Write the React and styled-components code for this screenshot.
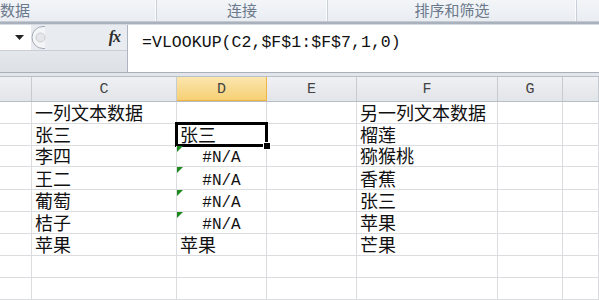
import React from 'react'
import styled, { createGlobalStyle } from 'styled-components'

const CJK = `"Noto Sans CJK SC", "Noto Sans", sans-serif`
const MONO = `"Liberation Mono", "DejaVu Sans Mono", monospace`

const GlobalStyle = createGlobalStyle`
  html, body {
    margin: 0;
    padding: 0;
    background: #ffffff;
    overflow: hidden;
  }
`

const Page = styled.div`
  width: 599px;
  height: 300px;
  overflow: hidden;
  display: flex;
  flex-direction: column;
  background: #ffffff;
`

/* ribbon group captions */
const Ribbon = styled.div`
  height: 21px;
  display: flex;
  background: linear-gradient(#f3f5f8, #e9edf2);
  border-bottom: 1px solid #c3c9d1;
`

const Group = styled.div`
  width: ${p => p.w}px;
  flex: none;
  display: flex;
  align-items: flex-start;
  padding-top: 2px;
  box-sizing: border-box;
  justify-content: ${p => (p.left ? 'flex-start' : 'center')};
  font-family: ${CJK};
  font-size: 15px;
  line-height: 15px;
  color: #6b798c;
  border-right: ${p => (p.last ? 'none' : '1px solid #c9d0d8')};
  box-shadow: ${p => (p.last ? 'none' : 'inset -1px 0 0 #fbfcfd')};
  overflow: hidden;
  white-space: nowrap;
`

const RibbonEdge = styled.div`
  height: 2px;
  background: #a9b1bc;
  border-bottom: 1px solid #d5dae0;
`

/* formula bar */
const FormulaBar = styled.div`
  height: 48px;
  display: flex;
  border-bottom: 1px solid #a9b0ba;
`

const Controls = styled.div`
  width: 127px;
  flex: none;
  display: flex;
  flex-direction: column;
  background: #e8ebef;
  border-right: 1px solid #aeb5bf;
`

const ControlRow = styled.div`
  height: 25px;
  display: flex;
  align-items: center;
  border-bottom: 1px solid #c9ced6;
`

const ControlFill = styled.div`
  flex: 1;
  background: linear-gradient(#e4e7eb, #dde1e6);
`

const NameBox = styled.div`
  width: 31px;
  height: 100%;
  background: #ffffff;
  display: flex;
  align-items: center;
  justify-content: flex-end;
  padding-right: 7px;
  box-sizing: border-box;
`

const Handle = styled.svg`
  width: 16px;
  height: 25px;
  flex: none;
`

const Fx = styled.span`
  margin-left: auto;
  margin-right: 7px;
  font-family: "Liberation Serif", serif;
  font-style: italic;
  font-weight: bold;
  font-size: 16px;
  line-height: 16px;
  letter-spacing: -1px;
  color: #2b2b2b;
`

const Input = styled.div`
  flex: 1;
  background: #ffffff;
  padding: 9px 0 0 14px;
  font-family: ${MONO};
  font-size: 16.5px;
  line-height: 17px;
  letter-spacing: 0.05px;
  color: #111111;
  white-space: nowrap;
`

const Strip = styled.div`
  height: 3px;
  background: #e2e5e9;
  border-bottom: 1px solid #b9bfc7;
`

/* sheet */
const COLS = '32px 145px 90px 90px 141px 65px 1fr'

const HeaderRow = styled.div`
  display: grid;
  grid-template-columns: ${COLS};
  height: 25px;
  border-bottom: 1px solid #b7bdc5;
`

const HeadCell = styled.div`
  display: flex;
  align-items: center;
  justify-content: center;
  font-family: ${MONO};
  font-size: 15px;
  line-height: 15px;
  color: #444444;
  background: ${p =>
    p.active ? 'linear-gradient(#fbe6ae, #f6cf72)' : 'linear-gradient(#eef0f3, #e2e5e9)'};
  border-right: 1px solid ${p => (p.active ? '#f0b54a' : '#c6cbd2')};
  box-shadow: ${p => (p.active ? 'inset 0 -1px 0 #efb343' : 'none')};
`

const Row = styled.div`
  display: grid;
  grid-template-columns: ${COLS};
  height: ${p => p.h}px;
  border-bottom: 1px solid #dadcdf;
  box-sizing: border-box;
`

const Cell = styled.div`
  position: relative;
  display: flex;
  align-items: flex-end;
  justify-content: ${p => (p.error ? 'center' : 'flex-start')};
  padding: 0 0 ${p => (p.error ? '1px' : '2px')} ${p => (p.error ? '0' : '3px')};
  border-right: 1px solid #dadcdf;
  color: #111111;
  white-space: nowrap;

  ${p =>
    p.error &&
    `
    &::before {
      content: '';
      position: absolute;
      left: 0;
      top: 0;
      border-top: 6px solid #1e8a1e;
      border-right: 6px solid transparent;
    }
  `}

  ${p =>
    p.selected &&
    `
    &::after {
      content: '';
      position: absolute;
      left: -2px;
      top: -2px;
      right: -2px;
      bottom: -2px;
      border: 3px solid #000000;
      pointer-events: none;
    }
  `}
`

const Text = styled.span`
  display: block;
  font-family: ${p => (p.error ? MONO : CJK)};
  font-size: ${p => (p.error ? '16px' : '18px')};
  line-height: ${p => (p.error ? '14px' : '17px')};
  height: ${p => (p.error ? '14px' : '17px')};
`

const FillHandle = styled.span`
  position: absolute;
  right: -5px;
  bottom: -5px;
  width: 6px;
  height: 6px;
  background: #000000;
  border: 1px solid #ffffff;
  z-index: 2;
`

const rows = [
  { h: 22, c: '一列文本数据', d: '', f: '另一列文本数据' },
  { h: 22, c: '张三', d: '张三', f: '榴莲', sel: true },
  { h: 22, c: '李四', d: '#N/A', f: '猕猴桃', err: true },
  { h: 23, c: '王二', d: '#N/A', f: '香蕉', err: true },
  { h: 22, c: '葡萄', d: '#N/A', f: '张三', err: true },
  { h: 23, c: '桔子', d: '#N/A', f: '苹果', err: true },
  { h: 22, c: '苹果', d: '苹果', f: '芒果' },
  { h: 23, c: '', d: '', f: '' },
  { h: 22, c: '', d: '', f: '' },
]

const App = () => (
  <Page>
    <GlobalStyle />
    <Ribbon>
      <Group w={157} left>数据</Group>
      <Group w={171}>连接</Group>
      <Group w={249}>排序和筛选</Group>
      <Group w={22} last />
    </Ribbon>
    <RibbonEdge />
    <FormulaBar>
      <Controls>
        <ControlRow>
          <NameBox>
            <svg width="9" height="5" viewBox="0 0 9 5">
              <path d="M0 0 H9 L4.5 5 Z" fill="#222" />
            </svg>
          </NameBox>
          <Handle viewBox="0 0 16 25">
            <path d="M14 1.5 H12 A10.5 10.5 0 0 0 12 23.5 H14" fill="#f4f5f7" stroke="#a3aab4" />
            <circle cx="9.5" cy="12.5" r="4.5" fill="#e4e6e9" stroke="#c7ccd2" />
          </Handle>
          <Fx>fx</Fx>
        </ControlRow>
        <ControlFill />
      </Controls>
      <Input>=VLOOKUP(C2,$F$1:$F$7,1,0)</Input>
    </FormulaBar>
    <Strip />
    <HeaderRow>
      <HeadCell />
      <HeadCell>C</HeadCell>
      <HeadCell active>D</HeadCell>
      <HeadCell>E</HeadCell>
      <HeadCell>F</HeadCell>
      <HeadCell>G</HeadCell>
      <HeadCell />
    </HeaderRow>
    {rows.map((r, i) => (
      <Row key={i} h={r.h}>
        <Cell />
        <Cell>{r.c && <Text>{r.c}</Text>}</Cell>
        <Cell error={r.err} selected={r.sel}>
          {r.d && <Text error={r.err}>{r.d}</Text>}
          {r.sel && <FillHandle />}
        </Cell>
        <Cell />
        <Cell>{r.f && <Text>{r.f}</Text>}</Cell>
        <Cell />
        <Cell />
      </Row>
    ))}
  </Page>
)

export default App
